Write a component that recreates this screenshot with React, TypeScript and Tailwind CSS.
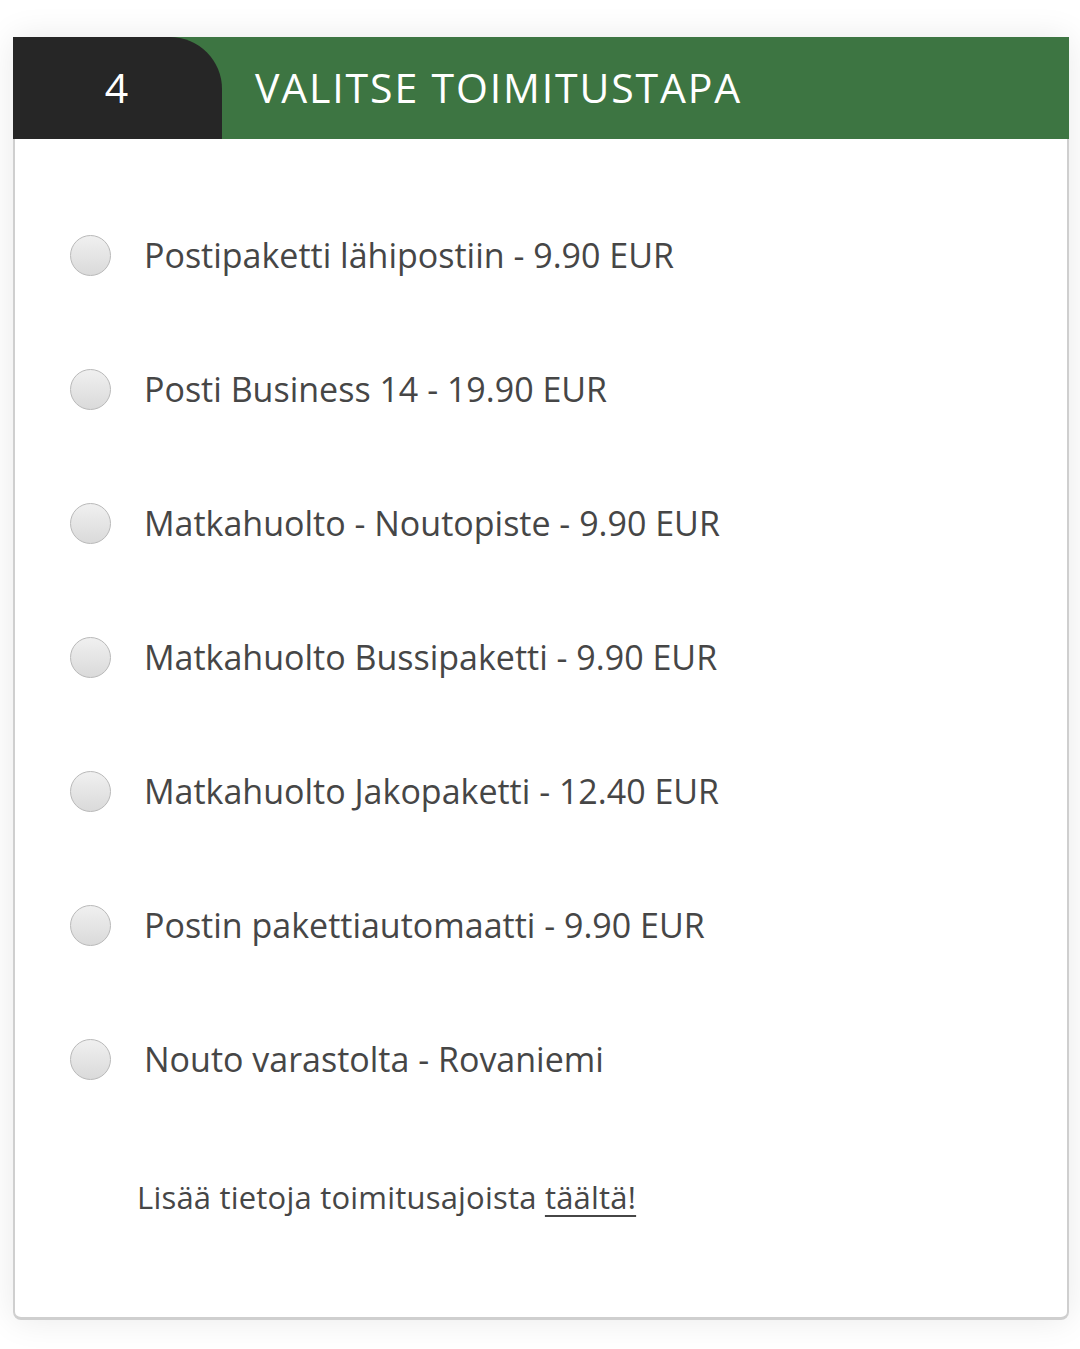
import React, { useState } from 'react';

const options = [
  'Postipaketti lähipostiin - 9.90 EUR',
  'Posti Business 14 - 19.90 EUR',
  'Matkahuolto - Noutopiste - 9.90 EUR',
  'Matkahuolto Bussipaketti - 9.90 EUR',
  'Matkahuolto Jakopaketti - 12.40 EUR',
  'Postin pakettiautomaatti - 9.90 EUR',
  'Nouto varastolta - Rovaniemi',
];

const App: React.FC = () => {
  const [selected, setSelected] = useState<number | null>(null);

  return (
    <div
      className="min-h-[1349px] w-[1080px] bg-white pt-[37px] pl-[13px] pr-[11px]"
      style={{ fontFamily: '"Open Sans", "Noto Sans", sans-serif' }}
    >
      <div className="w-[1056px] rounded-b-lg shadow-[0_0_34px_rgba(0,0,0,0.09)]">
        <div className="flex h-[102px] bg-[#3d7542]">
          <div className="flex w-[209px] items-center justify-center rounded-tr-[52px] bg-[#262626] pr-[2px] text-[41px] text-white">
            4
          </div>
          <div className="flex items-center pl-[33px] text-[41px] tracking-[1.85px] text-white">
            VALITSE TOIMITUSTAPA
          </div>
        </div>
        <div className="rounded-b-lg border-x-2 border-b-[3px] border-[#cfcfcf] bg-white pt-[49px] pb-[97px]">
          <div className="flex flex-col">
            {options.map((opt, i) => (
              <label
                key={opt}
                className="flex h-[134px] cursor-pointer items-center pl-[55px]"
                onClick={() => setSelected(i)}
              >
                <span
                  className={`h-[41px] w-[41px] shrink-0 rounded-full border-[1.5px] border-[#b9b9b9] ${
                    selected === i
                      ? 'bg-[#3d7542]'
                      : 'bg-gradient-to-b from-[#f0f0f0] to-[#dadada]'
                  }`}
                />
                <span className="ml-[33px] text-[34px] text-[#464646]">{opt}</span>
              </label>
            ))}
          </div>
          <p className="mt-[48px] pl-[122px] text-[31px] leading-[46px] tracking-[0.2px] text-[#464646]">
            Lisää tietoja toimitusajoista{' '}
            <a href="#" className="underline decoration-2 underline-offset-[6px]">
              täältä!
            </a>
          </p>
        </div>
      </div>
    </div>
  );
};

export default App;
